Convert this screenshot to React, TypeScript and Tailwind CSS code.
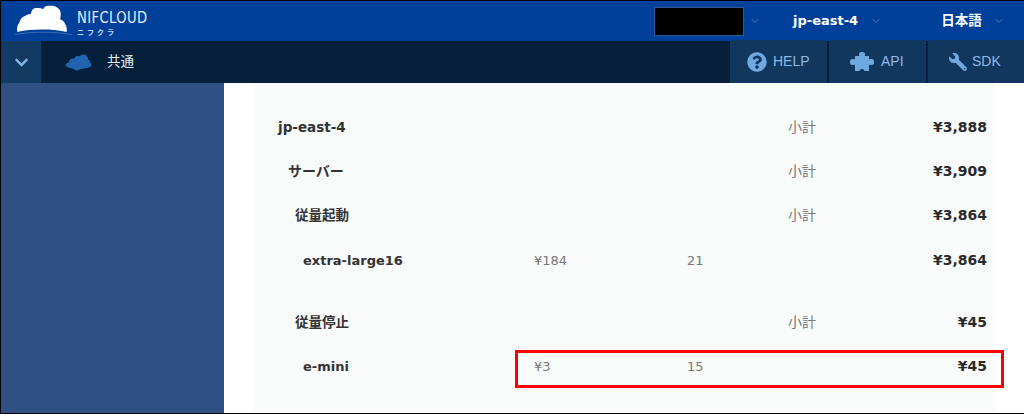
import { ChevronDown } from 'lucide-react'
import { FaChevronDown, FaQuestionCircle, FaWrench } from 'react-icons/fa'

const rows = [
  { label: 'jp-east-4', indent: 'pl-6', price: '', qty: '', sub: '小計', total: '¥3,888', cls: 'h-[44px]', size: 'text-[13.5px]' },
  { label: 'サーバー', indent: 'pl-[34px]', price: '', qty: '', sub: '小計', total: '¥3,909', cls: 'h-[44px]', size: 'text-[14px]' },
  { label: '従量起動', indent: 'pl-[41px]', price: '', qty: '', sub: '小計', total: '¥3,864', cls: 'h-[45px]', size: 'text-[13.5px]' },
  { label: 'extra-large16', indent: 'pl-[49px]', price: '¥184', qty: '21', sub: '', total: '¥3,864', cls: 'h-[45px] mb-[17px]', size: 'text-[13px]' },
  { label: '従量停止', indent: 'pl-[41px]', price: '', qty: '', sub: '小計', total: '¥45', cls: 'h-[44px]', size: 'text-[13.5px]' },
  { label: 'e-mini', indent: 'pl-[49px]', price: '¥3', qty: '15', sub: '', total: '¥45', cls: 'h-[45px]', size: 'text-[13px]' },
]

function LogoCloud() {
  return (
    <svg viewBox="0 0 58 32" className="w-[58px] h-[32px] text-white" fill="currentColor">
      <path d="M3.3 27 C2.5 23 3.5 19.5 5.3 17.7 C6.5 13.5 8.5 11.5 11 11 C13 9.5 15 9 16.7 9.3 C17.5 5.5 19 3.3 21.5 3 C24.5 2.7 27.5 3 29.3 4.3 C30 2 31.5 1 34 0.8 C37 0.5 40 0.5 41.5 1.5 C44.5 3 46 4.5 46.5 7 C47 9.5 46.8 12 46 14.3 C48.5 15 50.3 16.5 51 18.7 C52.5 20.5 53 23.5 52.7 27 C44 25.2 36 24.6 27.7 24.6 C19 24.6 11 25.4 3.3 27 Z" />
      <path d="M1 29.5 C18 26.5 40 26.5 58 29.5" fill="none" stroke="currentColor" strokeWidth="0.5" opacity="0.45" />
    </svg>
  )
}

function NavCloud() {
  return (
    <svg viewBox="0 0 27 17" className="w-[27px] h-[17px] text-[#1f64b0]" fill="currentColor">
      <ellipse cx="13.5" cy="11" rx="13" ry="4" />
      <circle cx="8" cy="8.5" r="4" />
      <circle cx="13" cy="6" r="4" />
      <circle cx="18.5" cy="5" r="4.5" />
      <circle cx="22" cy="9" r="3.5" />
      <circle cx="12" cy="13" r="3.5" />
    </svg>
  )
}

function PuzzleIcon() {
  return (
    <svg viewBox="0 0 24 21" className="w-[24px] h-[21px]" fill="currentColor">
      <rect x="5" y="5" width="14" height="15" />
      <rect x="9" y="1" width="6" height="5" rx="2.5" />
      <rect x="0" y="8" width="6" height="6" rx="2.5" />
      <rect x="18" y="8" width="6" height="6" rx="2.5" />
      <circle cx="12" cy="20.5" r="2.5" className="text-[#12375f]" fill="currentColor" />
    </svg>
  )
}

function Tab({ icon, label, className }: { icon: React.ReactNode; label: string; className: string }) {
  return (
    <div className={`h-[43px] bg-[#12375f] rounded-t-[3px] flex items-center text-[14px] font-medium text-[#8db8e4] ${className}`}>
      <span className="text-[#6fa9e0]">{icon}</span>
      <span>{label}</span>
    </div>
  )
}

export default function App() {
  return (
    <div className="relative w-[1024px] h-[414px] overflow-hidden bg-white border-t border-l border-b border-black font-['Liberation_Sans','Noto_Sans_CJK_JP',sans-serif]">
      <header className="h-[40px] bg-[#00409b] flex items-center text-white">
        <div className="w-[653px] flex items-center pl-[13px]">
          <LogoCloud />
          <div className="ml-[5px] leading-none">
            <div className="text-[16px] tracking-[0.5px] text-[#e6edf7] font-['DejaVu_Sans',sans-serif] scale-x-[0.82] origin-left whitespace-nowrap mt-[3px]">NIFCLOUD</div>
            <div className="text-[7px] font-bold tracking-[3px] text-[#c9d8ee] mt-[3px]">ニフクラ</div>
          </div>
        </div>
        <div className="w-[90px] h-[29px] bg-black border border-[#2c5a96]" />
        <ChevronDown size={12} className="ml-[5px] text-[#4d79b8]" />
        <span className="ml-[32px] text-[13px] font-bold font-['DejaVu_Sans',sans-serif]">jp-east-4</span>
        <ChevronDown size={12} className="ml-[12px] text-[#4d79b8]" />
        <span className="ml-[59px] text-[13.5px] font-bold">日本語</span>
        <ChevronDown size={12} className="ml-[11px] text-[#4d79b8]" />
      </header>
      <nav className="h-[42px] bg-[#06203c] flex items-center text-white">
        <div className="w-[40px] h-full bg-[#123a63] flex items-center justify-center text-[#7db4e8]">
          <FaChevronDown size={15} />
        </div>
        <div className="ml-[24px] flex"><NavCloud /></div>
        <span className="ml-[15px] text-[13.5px] text-[#e8edf3]">共通</span>
        <div className="ml-auto flex items-end self-end gap-[2px]">
          <Tab className="w-[97px] pl-[17px] gap-[6px]" label="HELP" icon={<FaQuestionCircle size={20} />} />
          <Tab className="w-[97px] pl-[21px] gap-[7px]" label="API" icon={<PuzzleIcon />} />
          <Tab className="w-[96px] pl-[21px] gap-[5px]" label="SDK" icon={<FaWrench size={18} className="-scale-x-100" />} />
        </div>
      </nav>
      <div className="flex h-[330px]">
        <aside className="w-[223px] bg-[#2f5082]" />
        <main className="w-[741px] ml-[30px] bg-[#f9fafa] pt-[22px] font-['DejaVu_Sans','Noto_Sans_CJK_JP',sans-serif] text-[#333]">
          {rows.map(r => (
            <div key={r.label} className={`grid grid-cols-[280px_153px_101px_1fr] items-center pr-[8px] ${r.cls}`}>
              <div className={`${r.indent} ${r.size} font-bold`}>{r.label}</div>
              <div className="text-[13px] text-[#777]">{r.price}</div>
              <div className="text-[13px] text-[#777]">{r.qty}</div>
              <div className="flex justify-between items-center">
                <span className="text-[14px] text-[#777]">{r.sub}</span>
                <span className="text-[14px] font-bold text-[#2a2a2a]">{r.total}</span>
              </div>
            </div>
          ))}
        </main>
      </div>
      <div className="absolute left-[514px] top-[349px] w-[489px] h-[38px] border-[3px] border-[#ff0000]" />
    </div>
  )
}
